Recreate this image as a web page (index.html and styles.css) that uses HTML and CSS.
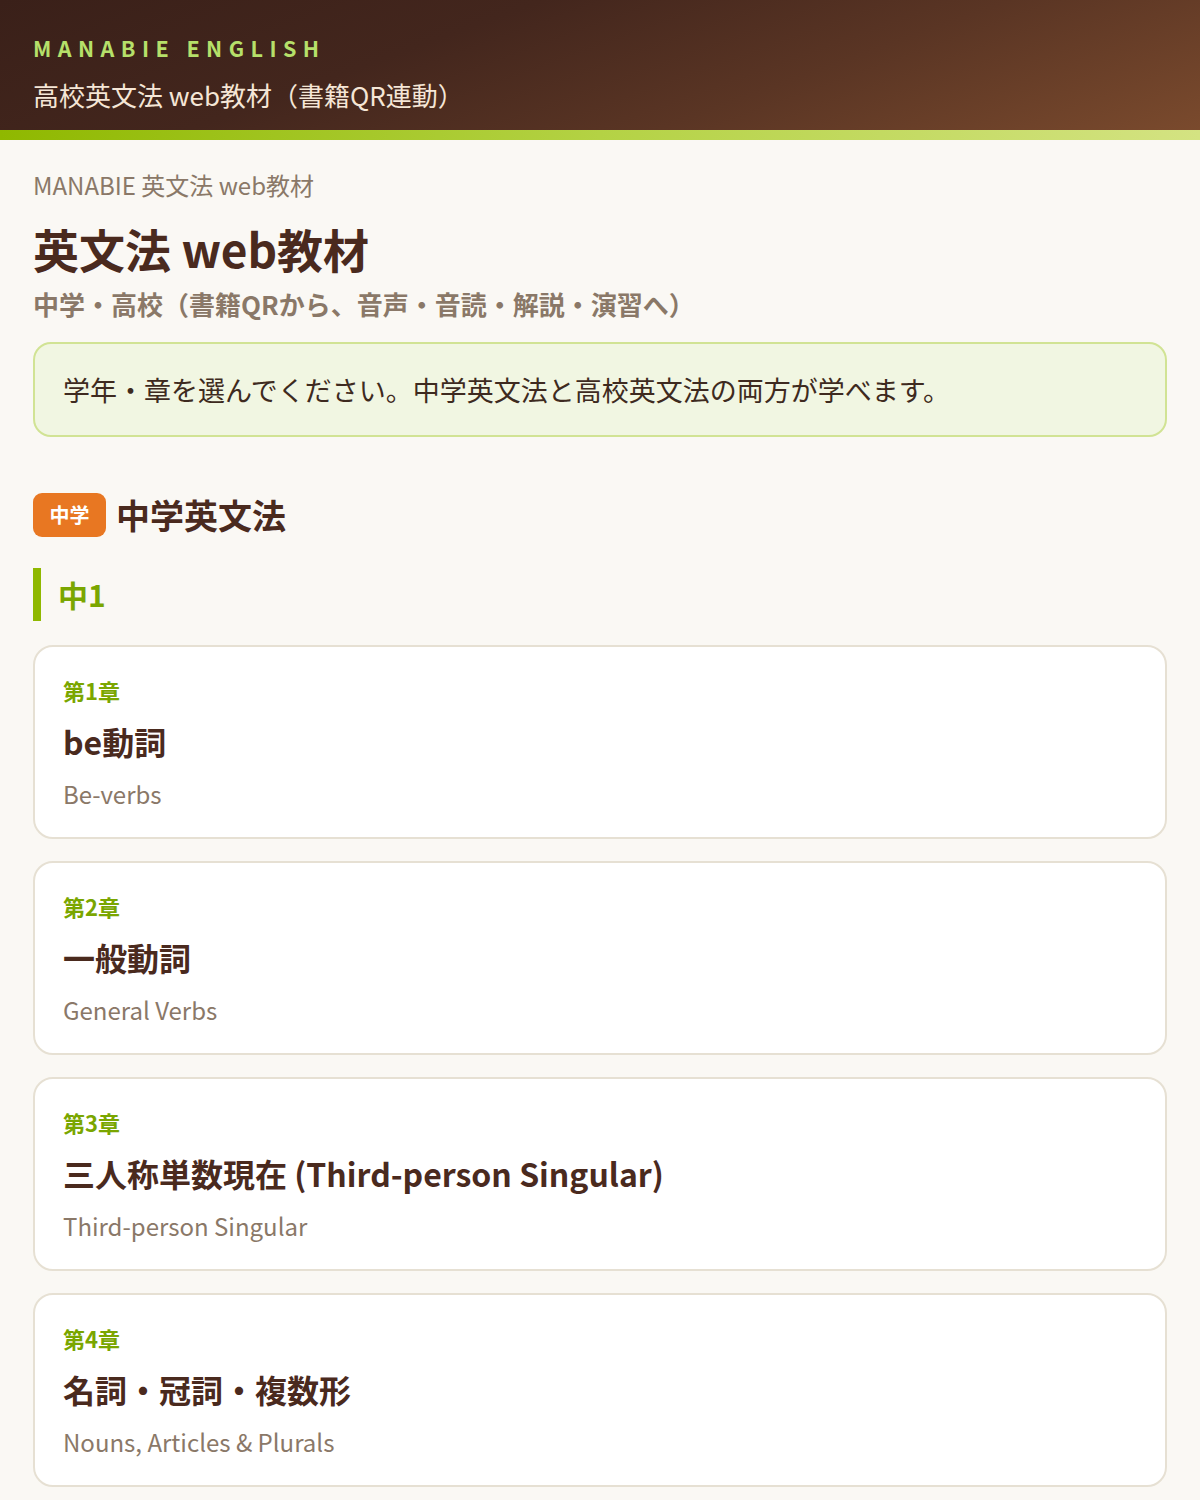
FILE: index.html
```html
<!DOCTYPE html>
<html lang="ja">
<head>
<meta charset="utf-8">
<title>英文法 web教材</title>
<link rel="stylesheet" href="styles.css">
</head>
<body>
<header class="site-header">
  <div class="brand">MANABIE ENGLISH</div>
  <div class="site-sub">高校英文法 web教材（書籍QR連動）</div>
</header>
<div class="accent-bar"></div>
<main class="page">
  <div class="crumb">MANABIE 英文法 web教材</div>
  <h1 class="title">英文法 web教材</h1>
  <p class="lead">中学・高校（書籍QRから、音声・音読・解説・演習へ）</p>
  <div class="notice">学年・章を選んでください。中学英文法と高校英文法の両方が学べます。</div>

  <section class="level">
    <h2 class="level-head"><span class="badge">中学</span><span>中学英文法</span></h2>
    <h3 class="grade">中1</h3>
    <div class="cards">
      <a class="card">
        <div class="chap">第1章</div>
        <div class="card-title">be動詞</div>
        <div class="card-en">Be-verbs</div>
      </a>
      <a class="card">
        <div class="chap">第2章</div>
        <div class="card-title">一般動詞</div>
        <div class="card-en">General Verbs</div>
      </a>
      <a class="card">
        <div class="chap">第3章</div>
        <div class="card-title">三人称単数現在 (Third-person Singular)</div>
        <div class="card-en">Third-person Singular</div>
      </a>
      <a class="card">
        <div class="chap">第4章</div>
        <div class="card-title">名詞・冠詞・複数形</div>
        <div class="card-en">Nouns, Articles &amp; Plurals</div>
      </a>
    </div>
  </section>
</main>
</body>
</html>
```

FILE: styles.css
```css
* { box-sizing: border-box; }
html, body { margin: 0; padding: 0; }
body {
  font-family: "Noto Sans CJK JP", "Noto Sans", sans-serif;
  background: #faf8f4;
  color: #4a2a1e;
}
.site-header {
  height: 130px;
  padding: 34px 33px 0;
  background: linear-gradient(160deg, #3a2019 0%, #43261d 35%, #5a3524 65%, #7a4a2d 100%);
}
.brand {
  font-size: 21.5px;
  line-height: 28px;
  font-weight: 700;
  letter-spacing: 0.3em;
  color: #b6e06a;
}
.site-sub {
  margin-top: 15px;
  font-size: 26px;
  line-height: 36px;
  color: #f5e6d6;
}
.accent-bar {
  height: 10px;
  background: linear-gradient(90deg, #8fb800 0%, #b4d244 50%, #d4e382 100%);
}
.page {
  padding: 27px 33px 40px;
}
.crumb {
  font-size: 24px;
  line-height: 36px;
  color: #8a7868;
}
.title {
  margin: 14px 0 0;
  font-size: 46px;
  line-height: 62px;
  font-weight: 700;
  color: #4a2a1e;
}
.lead {
  margin: 6px 0 0;
  font-size: 26px;
  line-height: 38px;
  font-weight: 700;
  color: #8a7868;
}
.notice {
  margin-top: 19px;
  padding: 27px 28px;
  border: 2px solid #d1e394;
  border-radius: 18px;
  background: #f1f6e2;
  font-size: 27px;
  line-height: 37px;
  color: #3e2a20;
}
.level { margin-top: 56px; }
.level-head {
  display: flex;
  align-items: center;
  gap: 10px;
  margin: 0;
  font-size: 34px;
  line-height: 44px;
  font-weight: 700;
  color: #4a2a1e;
}
.badge {
  display: inline-flex;
  align-items: center;
  justify-content: center;
  width: 73px;
  height: 44px;
  border-radius: 9px;
  background: #e87722;
  color: #fff;
  font-size: 20px;
}
.grade {
  margin: 31px 0 0;
  padding-left: 17px;
  border-left: 8px solid #8fb800;
  font-size: 30px;
  line-height: 53px;
  font-weight: 700;
  color: #7aa600;
}
.cards {
  margin-top: 24px;
  display: flex;
  flex-direction: column;
  gap: 22px;
}
.card {
  display: block;
  background: #fff;
  border: 2px solid #e6e0d3;
  border-radius: 20px;
  padding: 28px 28px 25px;
}
.chap {
  font-size: 22px;
  line-height: 30px;
  font-weight: 700;
  color: #7aa600;
}
.card-title {
  margin-top: 14px;
  font-size: 32px;
  line-height: 44px;
  font-weight: 700;
  color: #4a2a1e;
}
.card-en {
  margin-top: 13px;
  font-size: 24px;
  line-height: 36px;
  color: #8a7868;
}
```
